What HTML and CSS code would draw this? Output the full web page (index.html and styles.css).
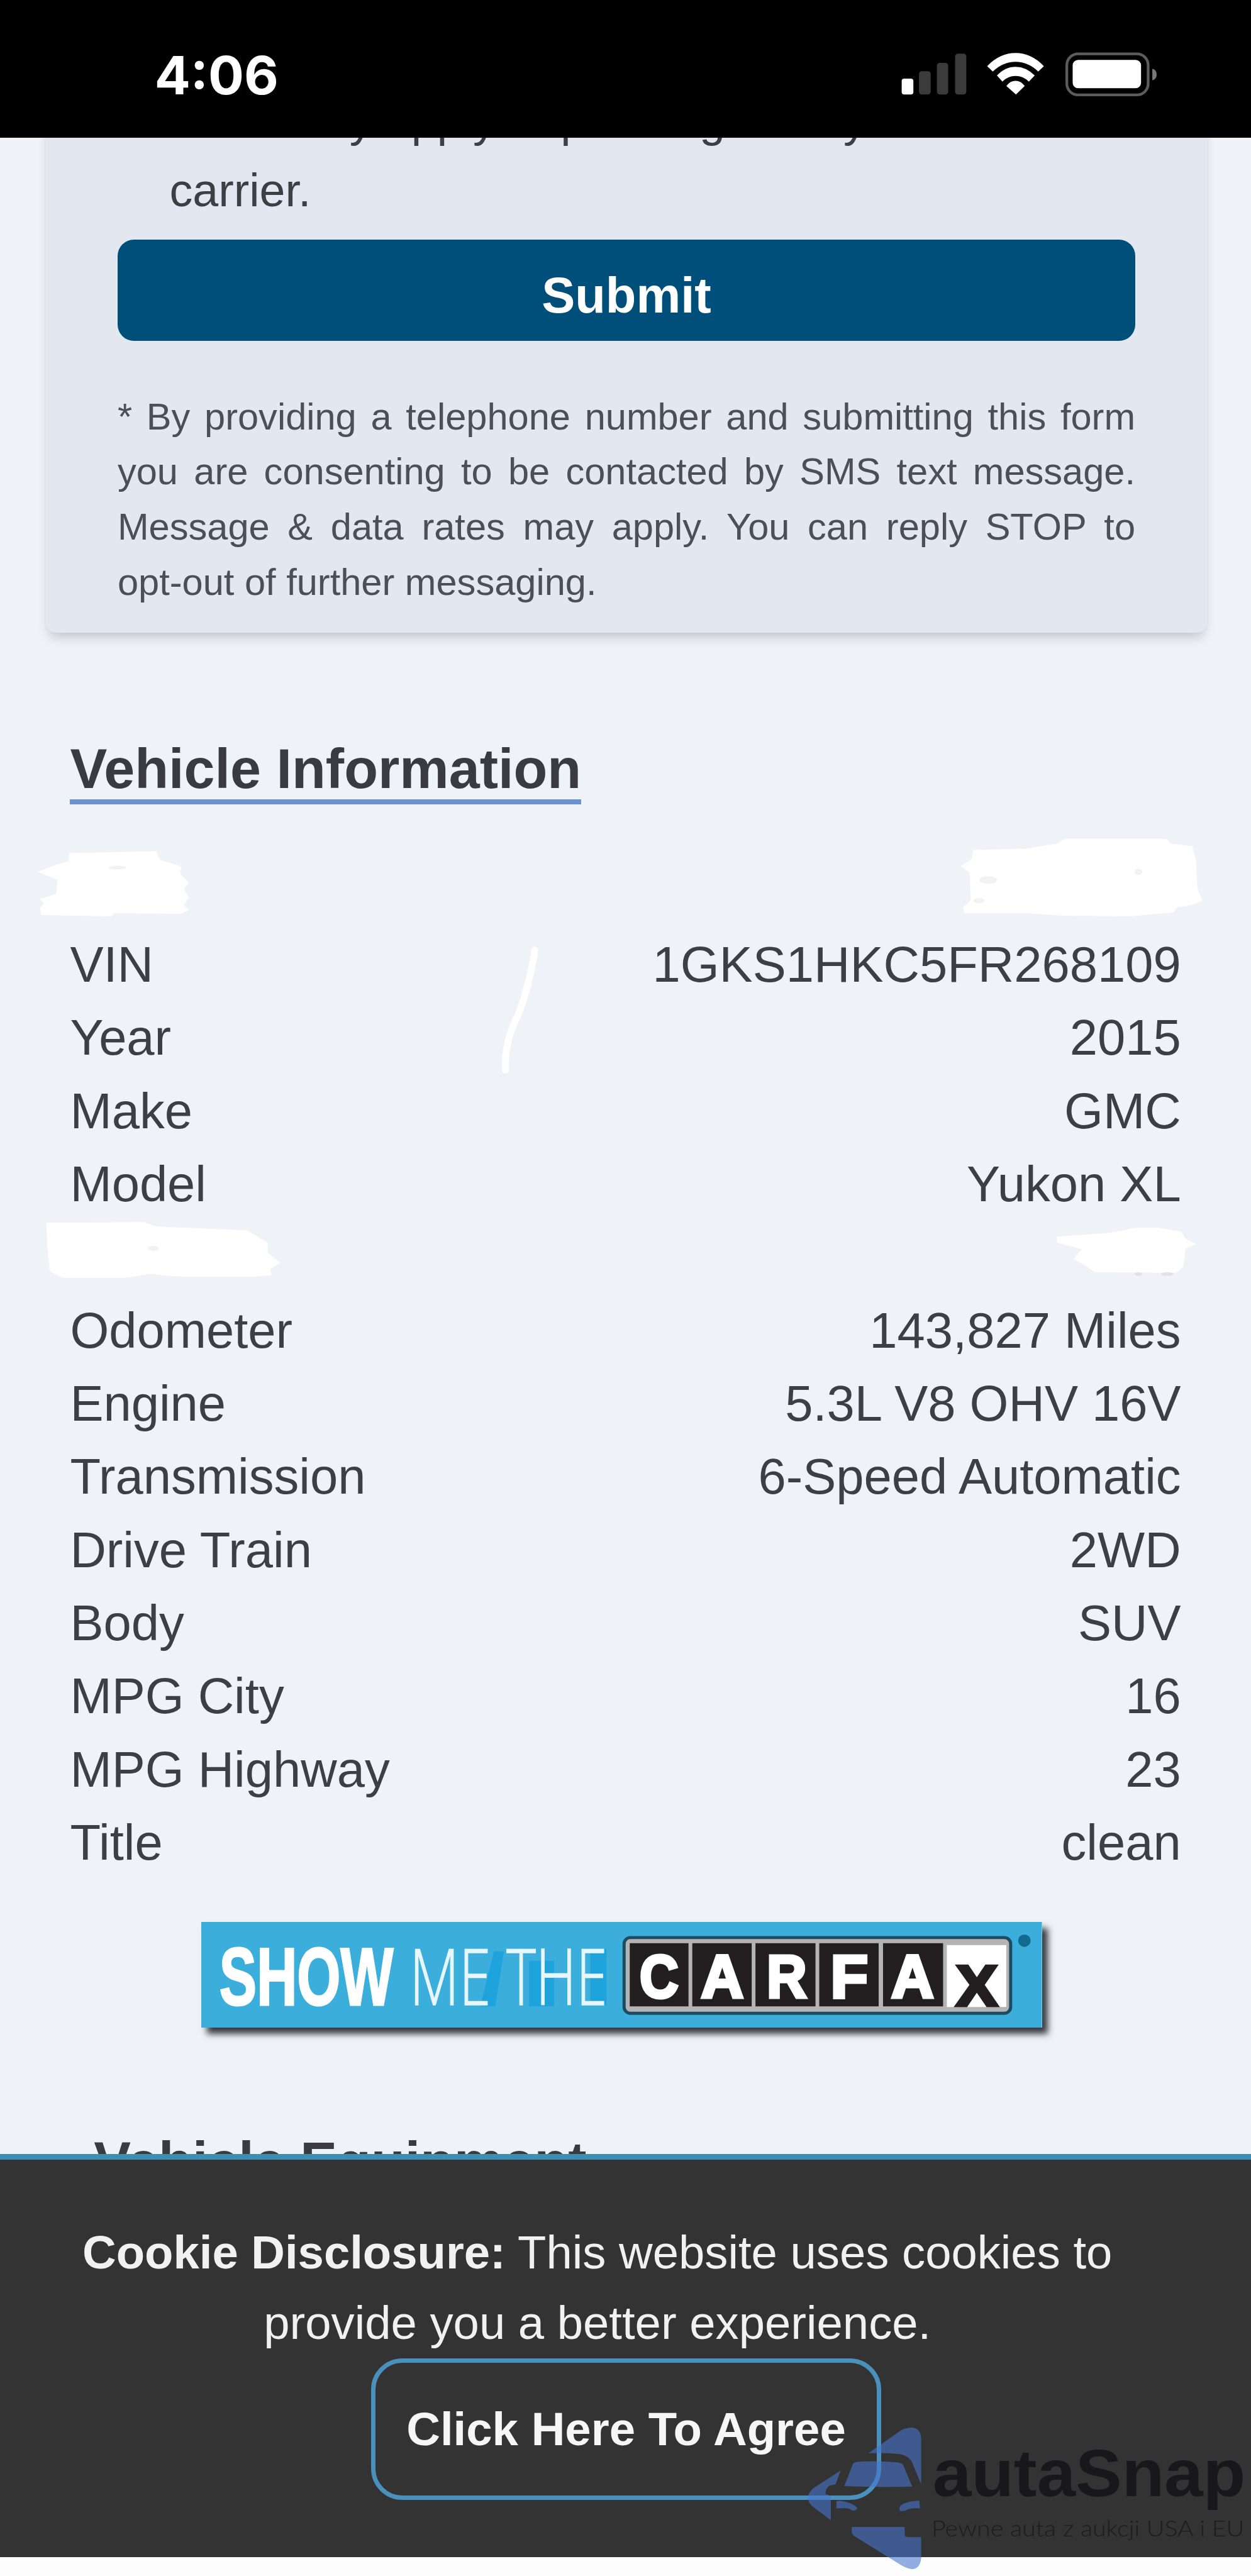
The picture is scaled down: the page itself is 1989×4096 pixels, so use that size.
FILE: index.html
```html
<!DOCTYPE html>
<html lang="en">
<head>
<meta charset="utf-8">
<title>Vehicle Information</title>
<link rel="stylesheet" href="styles.css">
</head>
<body>
<header class="status">
  <span class="clock">4:06</span>
  <svg class="status-icons" viewBox="100 90 1260 230" aria-hidden="true">
    <rect x="120" y="226" width="56" height="76" rx="12" fill="#fff"/>
    <rect x="203" y="190" width="56" height="112" rx="14" fill="#3b3b3b"/>
    <rect x="289" y="150" width="54" height="152" rx="14" fill="#3b3b3b"/>
    <rect x="376" y="106" width="54" height="196" rx="14" fill="#3b3b3b"/>
    <g fill="#fff">
      <path d="M530 166Q590 103 666 103T802 166L775 192Q727 145 666 145T557 192Z"/>
      <path d="M577 211Q615 169 666 169T758 211L730 240Q702 213 666 213T603 240Z"/>
      <path d="M622 261Q640 236 666 236T710 261L668 302Z"/>
    </g>
    <rect x="912" y="107" width="390" height="197" rx="54" fill="none" stroke="#5c5c5c" stroke-width="13"/>
    <rect x="940" y="136" width="328" height="136" rx="26" fill="#fff"/>
    <path d="M1322 178Q1343 184 1343 206T1322 234Z" fill="#777"/>
  </svg>
</header>

<main class="page">
  <section class="card">
    <p class="terms">rates may apply depending from your<br>carrier.</p>
    <button class="submit">Submit</button>
    <p class="consent">* By providing a telephone number and submitting this form you are consenting to be contacted by SMS text message. Message &amp; data rates may apply. You can reply STOP to <span class="keep">opt-out</span> of further messaging.</p>
  </section>

  <section class="info">
    <h2 class="title underlined">Vehicle Information</h2>
    <dl class="specs">
      <div class="row"></div>
      <div class="row"><dt>VIN</dt><dd>1GKS1HKC5FR268109</dd></div>
      <div class="row"><dt>Year</dt><dd>2015</dd></div>
      <div class="row"><dt>Make</dt><dd>GMC</dd></div>
      <div class="row"><dt>Model</dt><dd>Yukon XL</dd></div>
      <div class="row"></div>
      <div class="row"><dt>Odometer</dt><dd>143,827 Miles</dd></div>
      <div class="row"><dt>Engine</dt><dd>5.3L V8 OHV 16V</dd></div>
      <div class="row"><dt>Transmission</dt><dd>6-Speed Automatic</dd></div>
      <div class="row"><dt>Drive Train</dt><dd>2WD</dd></div>
      <div class="row"><dt>Body</dt><dd>SUV</dd></div>
      <div class="row"><dt>MPG City</dt><dd>16</dd></div>
      <div class="row"><dt>MPG Highway</dt><dd>23</dd></div>
      <div class="row"><dt>Title</dt><dd>clean</dd></div>
      <svg class="scribbles" viewBox="0 1280 2000 800" aria-hidden="true">
        <g fill="#fff">
          <path d="M110 1365L250 1362L256 1376L290 1386L288 1398L302 1412L294 1422L302 1436L294 1448L302 1456L290 1462L182 1461L178 1466L66 1464L64 1452L70 1446L64 1438L90 1430L92 1408L60 1395L88 1384L110 1378Z"/>
          <path d="M1556 1360L1640 1358L1690 1350L1702 1342L1864 1342L1872 1350L1906 1354L1912 1376L1914 1420L1922 1441L1905 1448L1882 1452L1876 1460L1805 1466L1700 1465L1640 1461L1542 1461L1540 1452L1552 1440L1550 1396L1536 1386L1554 1374Z"/>
          <path d="M74 1956L230 1955L250 1962L395 1968L418 1982L428 1988L428 2004L448 2020L432 2030L434 2040L410 2042L285 2042L240 2038L200 2044L100 2044L80 2034L76 2000Z"/>
          <path d="M1690 1978L1775 1972L1815 1964L1850 1964L1888 1970L1896 1982L1912 1990L1895 1998L1892 2026L1880 2036L1750 2035L1735 2024L1716 2014L1730 1998L1690 1988Z"/>
        </g>
        <path d="M855 1520Q848 1570 830 1620Q806 1665 808 1712" fill="none" stroke="#fff" stroke-width="11" stroke-linecap="round"/>
        <g fill="#f2f2f3">
          <ellipse cx="1580" cy="1408" rx="14" ry="6"/><ellipse cx="1565" cy="1441" rx="9" ry="4"/>
          <ellipse cx="1820" cy="1395" rx="6" ry="5"/><ellipse cx="245" cy="1997" rx="9" ry="4"/>
          <ellipse cx="188" cy="1388" rx="14" ry="3"/>
        </g>
        <g fill="#e0e2e6">
          <ellipse cx="1820" cy="2038" rx="6" ry="3"/><ellipse cx="1866" cy="2038" rx="10" ry="3"/>
        </g>
      </svg>
    </dl>

    <svg class="carfax" viewBox="322 3073 1344 169">
      <rect x="322" y="3073" width="1344" height="169" fill="#3baedb"/>
      <path d="M790 3120h16l-14 88h-24zM846 3135h40v73h-40zM944 3116h26v90h-26z" fill="#1ea3dc"/>
      <text class="fax-show" x="351" y="3206" textLength="278" lengthAdjust="spacingAndGlyphs">SHOW</text>
      <text class="fax-me" x="655" y="3206" textLength="130" lengthAdjust="spacingAndGlyphs">ME</text>
      <text class="fax-me" x="810" y="3206" textLength="161" lengthAdjust="spacingAndGlyphs">THE</text>
      <rect x="998" y="3098" width="618" height="121" rx="10" fill="#b4b4b4" stroke="#1d4c62" stroke-width="5"/>
      <g fill="#231f20">
        <rect x="1007" y="3107" width="94" height="101"/><rect x="1107" y="3107" width="95" height="101"/>
        <rect x="1208" y="3107" width="96" height="101"/><rect x="1310" y="3107" width="95" height="101"/>
        <rect x="1412" y="3107" width="96" height="101"/>
      </g>
      <rect x="1514" y="3110" width="95" height="99" fill="#fff"/>
      <g class="fax-letter">
        <text x="1054" y="3194" textLength="62" lengthAdjust="spacingAndGlyphs">C</text>
        <text x="1155" y="3194" textLength="68" lengthAdjust="spacingAndGlyphs">A</text>
        <text x="1258" y="3194" textLength="64" lengthAdjust="spacingAndGlyphs">R</text>
        <text x="1358" y="3194" textLength="60" lengthAdjust="spacingAndGlyphs">F</text>
        <text x="1459" y="3194" textLength="68" lengthAdjust="spacingAndGlyphs">A</text>
        <text class="fax-x" x="1562" y="3207" textLength="66" lengthAdjust="spacingAndGlyphs">X</text>
      </g>
      <circle cx="1638" cy="3103" r="10" fill="#14698f"/>
    </svg>

    <h2 class="title next">Vehicle Equipment</h2>
  </section>
</main>

<footer class="cookie">
  <p class="cookie-text"><b>Cookie Disclosure:</b> This website uses cookies to<br>provide you a better experience.</p>
  <button class="agree">Click Here To Agree</button>
</footer>

<div class="watermark">
  <svg class="mark" viewBox="80 235 400 700" preserveAspectRatio="none" aria-hidden="true">
    <g fill="#4775d0" fill-opacity=".59">
      <path d="M290 367L398 258Q418 243 437 244Q466 250 466 300V516L436 412Q425 375 385 370Q340 364 290 367Z"/>
      <path d="M237 422Q240 409 258 408Q320 402 385 411Q401 413 406 424L436 527Q320 532 209 525Z"/>
      <path d="M197 450L180 516L160 522Q146 535 146 562L164 572V688L105 625Q70 582 105 535Z"/>
      <path d="M183 598Q190 592 205 597Q248 612 252 632Q248 645 236 642Q222 628 208 631L182 632Z"/>
      <path d="M460 595L462 632Q436 629 422 636Q410 648 396 644Q386 622 412 606Q436 594 460 595Z"/>
      <path d="M234 721H411V760Q412 770 424 770H466V870Q462 922 436 923Q420 922 400 905L240 762Q233 752 234 740Z"/>
    </g>
  </svg>
  <svg class="mark-text" viewBox="1484 3890 510 190">
    <text class="brand" x="1491" y="3991" textLength="500" lengthAdjust="spacingAndGlyphs">autaSnap</text>
    <text class="tagline" x="1489" y="4055" textLength="500" lengthAdjust="spacingAndGlyphs">Pewne auta z aukcji USA i EU</text>
  </svg>
</div>
</body>
</html>
```
FILE: styles.css
```css
/* 1rem is ten design units on a 2000-unit wide canvas */
html { font-size: 9.945px; }
* { box-sizing: border-box; }
body {
  margin: 0;
  position: relative;
  height: 4096px;
  overflow: hidden;
  display: flex;
  flex-direction: column;
  background: #fdfdfd;
  color: #3c3f44;
  font-family: "Liberation Sans", Arial, sans-serif;
}
p, h2, dl, dd { margin: 0; }
button { font-family: inherit; display: block; padding: 0; }

.status {
  flex: none;
  height: 22rem;
  padding: 8rem 14.5rem 0 24.7rem;
  display: flex;
  justify-content: space-between;
  align-items: flex-start;
  background: #000;
}
.clock {
  color: #fff;
  font: 700 8.5rem/7.9rem Inter, "Liberation Sans", sans-serif;
}
.status-icons { width: 42rem; height: 7.67rem; }

.page {
  flex: none;
  height: 322.4rem;
  overflow: hidden;
  background: #eff3f8;
}
.card {
  margin: -8.2rem 7rem 0 7.3rem;
  padding: 0 11.5rem 3.6rem;
  border-radius: 1.6rem;
  background: #e2e7f0;
  box-shadow: 0 1.4rem 1.8rem -0.6rem rgba(0, 0, 0, .17), 0 0 0.8rem rgba(0, 0, 0, .04);
}
.terms {
  padding-left: 8.3rem;
  font-size: 7.4rem;
  line-height: 11.1rem;
  white-space: nowrap;
}
.submit {
  width: 100%;
  height: 16.2rem;
  margin-top: 2.3rem;
  padding-top: 1.7rem;
  border: 0;
  border-radius: 2.6rem;
  background: #004f7a;
  color: #fff;
  font-size: 8rem;
  font-weight: 700;
}
.consent {
  margin-top: 7.7rem;
  font-size: 5.99rem;
  line-height: 8.83rem;
  text-align: justify;
  color: #4c5056;
}
.keep { white-space: nowrap; }

.info {
  padding: 17rem 11.2rem 0;
  display: flex;
  flex-direction: column;
  align-items: flex-start;
}
.title {
  font-size: 8.86rem;
  line-height: 9.7rem;
  font-weight: 700;
  color: #393b40;
}
.underlined { border-bottom: 0.9rem solid #6b91d2; }
.specs {
  position: relative;
  width: 100%;
  margin-top: 8.1rem;
  font-size: 8rem;
  line-height: 11.7rem;
}
.row {
  height: 11.7rem;
  display: flex;
  justify-content: space-between;
}
/* eraser strokes over the table */
.scribbles {
  position: absolute;
  left: -11.2rem;
  top: -8.8rem;
  width: 200rem;
  height: 80rem;
}
.carfax {
  width: 134.4rem;
  height: 16.9rem;
  margin: 6.8rem 0 0 21rem;
  box-shadow: 0.9rem 1rem 1rem rgba(20, 25, 30, .85);
}
.carfax text { font-family: "Liberation Sans", sans-serif; }
.carfax .fax-show { font-size: 130px; font-weight: 700; fill: #fff; stroke: #fff; stroke-width: 3px; }
.carfax .fax-me { font-family: "Open Sans", sans-serif; font-size: 125px; font-weight: 300; fill: #e8f7ff; stroke: #e8f7ff; stroke-width: 1.5px; }
.fax-letter { text-anchor: middle; fill: #fff; }
.carfax .fax-letter text { font-size: 97px; font-weight: 700; stroke: #fff; stroke-width: 5px; }
.carfax .fax-letter .fax-x { font-size: 91px; fill: #231f20; stroke: #231f20; }
.next { margin: 16.7rem 0 0 3.8rem; white-space: nowrap; }

.cookie {
  flex: none;
  height: 64.5rem;
  border-top: 1rem solid #3f8db0;
  padding-top: 9.2rem;
  background: #333;
  color: #f1f1f1;
}
.cookie-text {
  width: 191rem;
  font-size: 7.47rem;
  line-height: 11.3rem;
  text-align: center;
}
.agree {
  width: 81.6rem;
  height: 22.6rem;
  margin: 0 0 0 59.3rem;
  border: 0.8rem solid #4a90bd;
  border-radius: 5rem;
  background: transparent;
  color: #f6f6f6;
  font-size: 7.48rem;
  font-weight: 700;
}

/* brand stamp laid over the bottom right corner */
.watermark { position: absolute; right: 0; top: 387.8rem; width: 71.2rem; height: 24rem; }
.mark { position: absolute; left: 0; top: 0.03rem; width: 19.13rem; height: 23.33rem; }
.mark-text { position: absolute; left: 19.6rem; top: 1.2rem; width: 51rem; height: 19rem; }
.brand { font: 700 107px "Liberation Sans", sans-serif; fill: #18181b; }
.tagline { font: 300 35px Lato, sans-serif; fill: #1c1c1e; }
```
